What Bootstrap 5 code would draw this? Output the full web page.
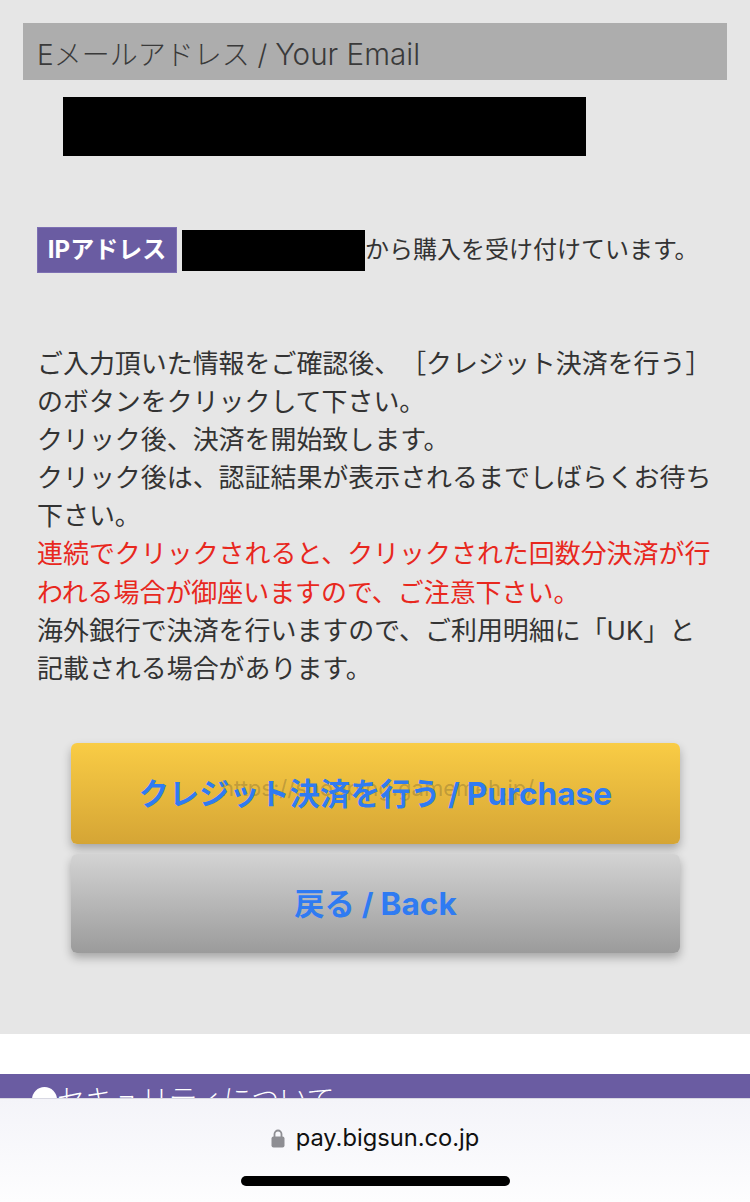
<!DOCTYPE html>
<html lang="ja">
<head>
<meta charset="utf-8">
<link href="https://cdn.jsdelivr.net/npm/bootstrap@5.3.0/dist/css/bootstrap.min.css" rel="stylesheet">
<style>
html,body{height:1202px;overflow:hidden;background:#fff;}
body{font-family:Inter,"Noto Sans CJK JP",sans-serif;color:#333;position:relative;text-spacing-trim:space-all;}
.panel{background:#e6e6e6;height:1034px;padding:23px 23px 0;}
.head-bar{background:#adadad;height:57px;font-size:28px;line-height:63px;padding-left:14px;color:#3a3a3a;font-weight:300;}
.head-latin{font-size:29.6px;}
.mask-mail{background:#000;width:523px;height:59px;margin:17px 0 0 40px;}
.ip-row{margin:71px 0 0 14px;height:46px;font-size:24px;line-height:46px;white-space:nowrap;color:#333;}
.ip-tag{background:#6a5ca2;color:#fff;font-weight:700;width:140px;height:46px;font-size:24px;text-align:center;border:1px solid #7d70b3;line-height:44px;}
.mask-ip{background:#000;width:183px;height:41px;margin:0 0 0 5px;}
.msg{margin:72px 0 0 14px;width:678px;font-size:25.95px;line-height:38.1px;color:#333;}
.msg-red{color:#e8281e;}
.btn-stack{margin:55px 0 0 48px;width:609px;}
.pay-btn{position:relative;display:flex;align-items:center;justify-content:center;width:100%;border:0;border-radius:6px;font-size:30.2px;font-weight:700;color:#2f7bf2;box-shadow:0 5px 10px rgba(0,0,0,.28);padding:1px 0 0;}
.btn-latin{font-size:31.6px;}
.pay-buy{height:101px;background:linear-gradient(#f9cc45,#d5a535);}
.pay-back{height:99px;margin-top:10px;background:linear-gradient(#d3d3d3,#9b9b9b);}
.ghost{position:absolute;left:150px;top:29px;font-size:22px;font-weight:400;color:rgba(90,80,50,.3);white-space:nowrap;}
.btn-label{position:relative;}
.sec-band{background:#6a5ca2;height:60px;margin-top:40px;color:#fff;font-size:28px;line-height:52px;padding-left:32px;display:flex;overflow:hidden;font-weight:300;}
.sec-dot{width:25px;height:25px;border-radius:50%;background:#fff;margin-top:13px;flex:none;}
.safari-bar{position:absolute;left:0;right:0;top:1098px;height:104px;background:linear-gradient(#f4f4f9,#fdfdfe);border-top:1px solid #d8d8e2;}
.url-line{position:absolute;left:0;right:0;top:22px;font-size:23.7px;color:#111;gap:11px;line-height:34px;}
.home-pill{position:absolute;left:241px;top:77px;width:269px;height:10px;border-radius:5px;background:#000;}
</style>
</head>
<body>
<div class="panel">
  <div class="head-bar">Eメールアドレス / <span class="head-latin">Your Email</span></div>
  <div class="mask-mail"></div>
  <div class="ip-row d-flex align-items-center">
    <span class="ip-tag">IPアドレス</span>
    <span class="mask-ip"></span>
    <span>から購入を受け付けています。</span>
  </div>
  <div class="msg">
    ご入力頂いた情報をご確認後、［クレジット決済を行う］のボタンをクリックして下さい。<br>
    クリック後、決済を開始致します。<br>
    クリック後は、認証結果が表示されるまでしばらくお待ち下さい。<br>
    <span class="msg-red">連続でクリックされると、クリックされた回数分決済が行われる場合が御座いますので、ご注意下さい。</span><br>
    海外銀行で決済を行いますので、ご利用明細に「UK」と記載される場合があります。
  </div>
  <div class="btn-stack">
    <button type="button" class="btn pay-btn pay-buy"><span class="ghost">https://shopping.gamemeh.jp/</span><span class="btn-label">クレジット決済を行う / <span class="btn-latin">Purchase</span></span></button>
    <button type="button" class="btn pay-btn pay-back"><span class="btn-label">戻る / <span class="btn-latin">Back</span></span></button>
  </div>
</div>
<div class="sec-band"><span class="sec-dot"></span><span>セキュリティについて</span></div>
<div class="safari-bar">
  <div class="url-line d-flex justify-content-center align-items-center">
    <svg width="14" height="19" viewBox="0 0 14 19" aria-hidden="true"><path d="M3.5 8V5a3.5 3.5 0 0 1 7 0v3" fill="none" stroke="#8e8e93" stroke-width="1.8"/><rect x="0.5" y="7.5" width="13" height="11" rx="2" fill="#8e8e93"/></svg>
    <span>pay.bigsun.co.jp</span>
  </div>
  <div class="home-pill"></div>
</div>
<script src="https://cdn.jsdelivr.net/npm/bootstrap@5.3.0/dist/js/bootstrap.bundle.min.js"></script>
</body>
</html>
